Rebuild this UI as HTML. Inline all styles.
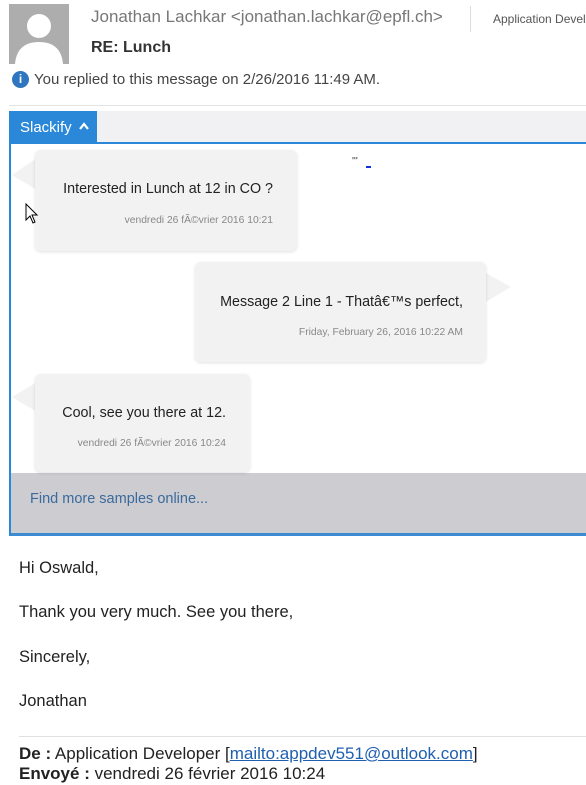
<!DOCTYPE html>
<html><head><meta charset="utf-8"><style>
*{margin:0;padding:0;box-sizing:border-box}
body{width:586px;height:785px;overflow:hidden;background:#fff;font-family:"Liberation Sans",sans-serif;position:relative}
.a{position:absolute;white-space:nowrap}
.bub{position:absolute;background:#f2f2f2;border-radius:6px;box-shadow:0 1px 3px rgba(0,0,0,.12)}
.bub .t{position:absolute;font-size:14.3px;color:#222}
.bub .d{position:absolute;font-size:10.3px;color:#888}
</style></head><body>
<div class="a" style="left:9px;top:4px;width:60px;height:60px;background:#adadad;overflow:hidden">
<svg width="60" height="60"><circle cx="30" cy="22" r="12" fill="#fff"/><path d="M6 60 Q8 38 30 38 Q52 38 54 60Z" fill="#fff"/></svg></div>
<div class="a" style="left:91px;top:7px;font-size:17px;color:#777">Jonathan Lachkar &lt;jonathan.lachkar@epfl.ch&gt;</div>
<div class="a" style="left:470px;top:6px;width:1px;height:26px;background:#ddd"></div>
<div class="a" style="left:493px;top:12px;font-size:12px;color:#555">Application Developer</div>
<div class="a" style="left:91px;top:39px;font-size:16px;font-weight:bold;color:#333">RE: Lunch</div>
<div class="a" style="left:12px;top:71px;width:17px;height:17px;border-radius:50%;background:#2f76c0;color:#fff;font-size:12px;font-weight:bold;text-align:center;line-height:17px">i</div>
<div class="a" style="left:34px;top:71px;font-size:15px;color:#444">You replied to this message on 2/26/2016 11:49 AM.</div>
<div class="a" style="left:9px;top:105px;width:577px;height:1px;background:#e4e4e4"></div>
<div class="a" style="left:97px;top:111px;width:489px;height:32px;background:#f1f1f3"></div>
<div class="a" style="left:9px;top:111px;width:88px;height:32px;background:#2b88d8;color:#fff;font-size:15px;padding:8px 0 0 11px">Slackify <svg width="10" height="8" style="margin-left:3px;vertical-align:2px"><path d="M1 7 L5 2 L9 7" fill="none" stroke="#fff" stroke-width="2.2"/></svg></div>
<div class="a" style="left:9px;top:142px;width:577px;height:394px;border:2px solid #2b88d8;border-right:none;border-bottom:3px solid #3c8ad0"></div>
<div class="a" style="left:11px;top:473px;width:575px;height:60px;background:#cdccd0"></div>
<div class="a" style="left:30px;top:491px;font-size:14.5px;color:#3a6a9e">Find more samples online...</div>
<div class="a" style="left:352px;top:156px;font-size:10px;color:#333">'''</div>
<div class="a" style="left:366px;top:166px;width:5px;height:2px;background:#1030e0"></div>
<svg class="a" style="left:0;top:140px" width="530" height="340">
<polygon points="37,18 12,35 37,50" fill="#f2f2f2"/>
<polygon points="484,132 511,147 484,163" fill="#f2f2f2"/>
<polygon points="37,242 12,257 37,272" fill="#f2f2f2"/>
</svg>
<div class="bub" style="left:35px;top:150px;width:262px;height:101px"><div class="t" style="right:24px;top:31px">Interested in Lunch at 12 in CO ?</div><div class="d" style="right:24px;top:65px">vendredi 26 fÃ©vrier 2016 10:21</div></div>
<div class="bub" style="left:195px;top:262px;width:291px;height:100px"><div class="t" style="right:23px;top:32px">Message 2 Line 1 - Thatâ€™s perfect,</div><div class="d" style="right:23px;top:65px">Friday, February 26, 2016 10:22 AM</div></div>
<div class="bub" style="left:35px;top:374px;width:215px;height:98px"><div class="t" style="right:24px;top:31px">Cool, see you there at 12.</div><div class="d" style="right:24px;top:64px">vendredi 26 fÃ©vrier 2016 10:24</div></div>
<svg class="a" style="left:25px;top:203px" width="14" height="22"><path d="M1 1 L1 17 L5 13 L8 20 L10 19 L7 12 L12 12 Z" fill="#fff" stroke="#000" stroke-width="1"/></svg>
<div class="a" style="left:19px;top:559px;font-size:16.5px;color:#222">Hi Oswald,</div>
<div class="a" style="left:19px;top:603px;font-size:16.5px;color:#222">Thank you very much. See you there,</div>
<div class="a" style="left:19px;top:648px;font-size:16.5px;color:#222">Sincerely,</div>
<div class="a" style="left:19px;top:692px;font-size:16.5px;color:#222">Jonathan</div>
<div class="a" style="left:19px;top:736px;width:567px;height:1px;background:#e0e0e0"></div>
<div class="a" style="left:19px;top:744px;font-size:17px;color:#222"><b>De :</b> Application Developer [<span style="color:#1f5fb0;text-decoration:underline">mailto:appdev551@outlook.com</span>]</div>
<div class="a" style="left:19px;top:764px;font-size:17px;color:#222"><b>Envoyé :</b> vendredi 26 février 2016 10:24</div>
</body></html>
